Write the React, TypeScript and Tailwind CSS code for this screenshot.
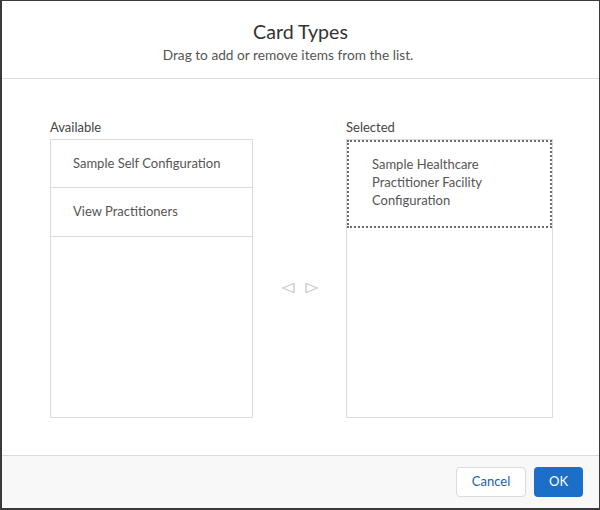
import React from "react";

export default function App() {
  return (
    <div
      className="w-[600px] h-[510px] flex flex-col bg-white border-t border-r border-l-2 border-b-2 border-[#3a3a3a] overflow-hidden"
      style={{ fontFamily: "Lato, 'Open Sans', sans-serif" }}
    >
      <div className="h-[78px] shrink-0 flex flex-col items-center border-b border-[#dddbda]">
        <div className="mt-[18px] text-[19.6px] leading-[26px] text-[#333333]">Card Types</div>
        <div className="mt-[1px] mr-[25px] text-[13.7px] leading-[18px] text-[#555555]">
          Drag to add or remove items from the list.
        </div>
      </div>
      <div className="flex-1 flex pl-[48px] pr-[46px] pt-[117px] pb-[37px] -mt-[78px]">
        <div className="w-[203px] flex flex-col">
          <div className="text-[13px] leading-[18px] text-[#444444] mb-[3px]">Available</div>
          <div className="flex-1 border border-[#dddbda] bg-white">
            <div className="h-[48px] flex items-center pl-[22px] border-b border-[#dddbda] text-[13px] text-[#555555]">
              Sample Self Configuration
            </div>
            <div className="h-[49px] flex items-center pl-[22px] border-b border-[#dddbda] text-[13px] text-[#555555]">
              View Practitioners
            </div>
          </div>
        </div>
        <div className="w-[93px] flex items-center justify-center gap-[10px] pt-[40px]">
          <svg width="14" height="12" viewBox="0 0 14 12">
            <path d="M13 1.5 L1.5 6 L13 10.5 Z" fill="none" stroke="#c9c9c9" strokeWidth="1.3" strokeLinejoin="round" />
          </svg>
          <svg width="14" height="12" viewBox="0 0 14 12">
            <path d="M1 1.5 L12.5 6 L1 10.5 Z" fill="none" stroke="#c9c9c9" strokeWidth="1.3" strokeLinejoin="round" />
          </svg>
        </div>
        <div className="w-[207px] flex flex-col">
          <div className="text-[13px] leading-[18px] text-[#444444] mb-[3px]">Selected</div>
          <div className="flex-1 border border-[#dddbda] bg-white">
            <div className="h-[88px] border-2 border-dotted border-[#6b6b6b] pl-[23px] pt-[13px] text-[13px] leading-[18px] text-[#555555]">
              Sample Healthcare
              <br />
              Practitioner Facility
              <br />
              Configuration
            </div>
          </div>
        </div>
      </div>
      <div className="h-[53px] shrink-0 bg-[#f8f8f8] border-t border-[#dddbda] flex items-center justify-end gap-[8px] pr-[16px]">
        <button className="h-[30px] w-[70px] rounded-[4px] border border-[#dddbda] bg-white text-[13px] text-[#1b5fae]">
          Cancel
        </button>
        <button className="h-[30px] w-[49px] rounded-[4px] bg-[#1b6fc8] text-[13px] text-white">
          OK
        </button>
      </div>
    </div>
  );
}
